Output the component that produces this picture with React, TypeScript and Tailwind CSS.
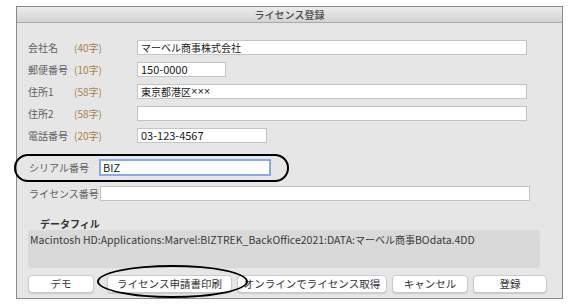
const jp = { fontFamily: '"Noto Sans CJK JP", "Noto Sans", sans-serif' };

// CJK runs are set a touch smaller than Latin runs, like the macOS system font
function Mixed({ text }: { text: string }) {
  const parts = text.split(/([\u3000-\u30ff\u4e00-\u9fff]+|×+)/).filter(Boolean);
  return (
    <>
      {parts.map((p, i) =>
        /^×+$/.test(p) ? (
          <span key={i} className="text-[11px]" style={{ fontFamily: '"Liberation Sans", sans-serif' }}>
            {p}
          </span>
        ) : /[\u3000-\u30ff\u4e00-\u9fff]/.test(p) ? (
          <span key={i} className="text-[10px]">
            {p}
          </span>
        ) : (
          <span key={i}>{p}</span>
        )
      )}
    </>
  );
}

function Field({ w, value, focus }: { w: string; value?: string; focus?: boolean }) {
  return (
    <div
      className={
        focus
          ? `flex h-[17px] shrink-0 items-center border-2 border-[#86a9ec] bg-white px-[2px] text-[11px] leading-none text-[#1a1a1a] ${w}`
          : `flex h-[15px] shrink-0 items-center border border-[#c4c4c4] bg-white px-[3px] text-[11px] leading-none text-[#1a1a1a] ${w}`
      }
    >
      {value ? <Mixed text={value} /> : null}
    </div>
  );
}

const rows = [
  { label: "会社名", limit: "(40字)", value: "マーベル商事株式会社", w: "w-[390px]" },
  { label: "郵便番号", limit: "(10字)", value: "150-0000", w: "w-[89px]" },
  { label: "住所1", limit: "(58字)", value: "東京都港区×××", w: "w-[390px]" },
  { label: "住所2", limit: "(58字)", value: "", w: "w-[390px]" },
  { label: "電話番号", limit: "(20字)", value: "03-123-4567", w: "w-[130px]" },
];

const buttons = [
  { label: "ライセンス申請書印刷", w: "w-[125px]" },
  { label: "オンラインでライセンス取得", w: "w-[150px]" },
  { label: "キャンセル", w: "w-[76px]" },
  { label: "登録", w: "w-[74px]" },
];

function Button({ label, w }: { label: string; w: string }) {
  return (
    <div
      className={`flex h-[18px] items-center justify-center rounded-[4px] border border-[#cacaca] bg-white text-[10.5px] leading-none text-[#333] shadow-[0_1px_1px_rgba(0,0,0,0.12)] ${w}`}
    >
      {label}
    </div>
  );
}

export default function App() {
  return (
    <div className="relative h-[308px] w-[575px] overflow-hidden bg-white" style={jp}>
      <div className="ml-[16px] mt-[6px] h-[293px] w-[547px] border border-[#8a8a8a] bg-[#e6e6e6]">
        {/* title bar */}
        <div className="flex h-[16px] items-center justify-center border-b border-[#a9a9a9] bg-gradient-to-b from-[#ececec] to-[#d3d3d3] text-[10px] font-medium leading-none text-[#4a4a4a]">
          ライセンス登録
        </div>

        <div className="flex flex-col pl-[11px] pt-[17px]">
          {rows.map((r) => (
            <div key={r.label} className="mb-[7px] flex h-[15px] items-center whitespace-nowrap text-[10px] leading-none">
              <span className="w-[46px] text-[#5e5e5e]">{r.label}</span>
              <span className="w-[63px] text-[#a9824a]">{r.limit}</span>
              <Field w={r.w} value={r.value} />
            </div>
          ))}

          <div className="mt-[9px] flex h-[17px] items-center whitespace-nowrap text-[10px] leading-none">
            <span className="w-[71px] pl-[1px] text-[#5e5e5e]">シリアル番号</span>
            <Field w="w-[172px]" value="BIZ" focus />
          </div>

          <div className="mt-[10px] flex h-[15px] items-center whitespace-nowrap text-[10px] leading-none">
            <span className="w-[72px] pl-[1px] text-[#5e5e5e]">ライセンス番号</span>
            <Field w="w-[430px]" />
          </div>

          <div className="ml-[12px] mt-[18px] text-[10px] font-bold leading-none text-[#333]">データフィル</div>
          <div className="mt-[1px] h-[38px] w-[512px] rounded-[4px] bg-[#d9d9d9] px-[2px] pt-[5px] text-[10.5px] leading-none text-[#3a3a3a]">
            <Mixed text="Macintosh HD:Applications:Marvel:BIZTREK_BackOffice2021:DATA:マーベル商事BOdata.4DD" />
          </div>

          <div className="mt-[7px] flex gap-[5px]">
            <Button label="デモ" w="mr-[8px] w-[66px]" />
            {buttons.map((b) => (
              <Button key={b.label} label={b.label} w={b.w} />
            ))}
          </div>
        </div>
      </div>

      {/* annotation ovals */}
      <div className="absolute left-[14px] top-[154px] h-[28px] w-[275px] rounded-full border-2 border-black" />
      <div className="absolute left-[97px] top-[265px] h-[33px] w-[151px] rounded-[50%] border-2 border-black" />
    </div>
  );
}
